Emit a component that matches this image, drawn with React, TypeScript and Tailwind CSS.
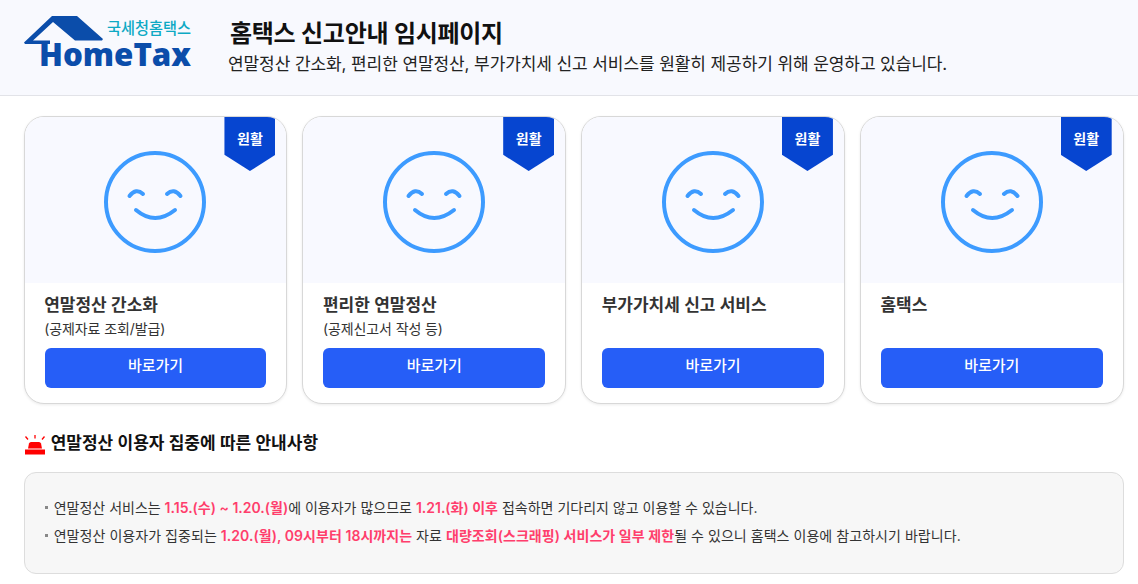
const FONT = "font-['Inter','Noto_Sans_CJK_KR',sans-serif]";

function Logo() {
  return (
    <svg width="170" height="64" viewBox="0 0 170 64" className="shrink-0">
      <path d="M0 27.500 L28 1 L53 1 L79 24 L78 25.500 L51 25.500 L29 7 L9 25.500 L26 25.500 L26 29 L1 29 Z" fill="#0b4daa" />
      <text x="15" y="51" fontFamily="'Open Sans',sans-serif" fontWeight="800" fontSize="32" fill="#0b4daa" textLength="152" lengthAdjust="spacingAndGlyphs">HomeTax</text>
      <text x="83" y="19" fontFamily="'Noto Sans CJK KR',sans-serif" fontWeight="500" fontSize="16" fill="#0da9c4" textLength="84" lengthAdjust="spacingAndGlyphs">국세청홈택스</text>
    </svg>
  );
}

function Smile() {
  return (
    <svg width="104" height="104" viewBox="0 0 104 104" fill="none" stroke="#3d9bff" strokeLinecap="round" strokeWidth="4">
      <circle cx="52" cy="52" r="49" />
      <path d="M26.500 46 Q33 37.500 40 44" />
      <path d="M64 44 Q71 37.500 77.500 46" />
      <path d="M33 60 Q52 76 72 60" />
    </svg>
  );
}

function Badge() {
  return (
    <div className="absolute top-0 right-[11px] w-[51px] h-[54px] bg-[#0645d0] [clip-path:polygon(0_0,100%_0,100%_70%,50%_100%,0_70%)] flex justify-center pt-[11px]">
      <span className="text-[14px] leading-[22px] font-semibold text-white">원활</span>
    </div>
  );
}

function Card({ title, sub }: { title: string; sub?: string }) {
  return (
    <div className="relative h-[288px] bg-white rounded-[20px] border border-[#d8d8d8] overflow-hidden flex flex-col shadow-[0_1px_3px_rgba(0,0,0,0.08)]">
      <div className="relative h-[166px] bg-[#f8f9ff] flex justify-center pt-[33px] pr-[0.5px]">
        <Smile />
        <Badge />
      </div>
      <div className="px-5 flex flex-col flex-1">
        <div className="mt-[9px] -ml-[0.5px] h-[26px] text-[17px] leading-[26px] font-semibold text-[#333]">{title}</div>
        <div className="-ml-[0.5px] h-[21px] text-[14px] leading-[21px] tracking-[-0.1px] text-[#333]">{sub}</div>
        <div className="mt-[9px] h-[40px] pb-[3px] rounded-[6px] bg-[#265ef7] text-white text-[15px] font-medium flex items-center justify-center">바로가기</div>
      </div>
    </div>
  );
}

function Siren() {
  return (
    <svg width="20" height="20" viewBox="0 0 20 20" className="shrink-0 mt-[3px]">
      <rect x="0" y="14.500" width="20" height="5" fill="#f00" />
      <path d="M3 13.500 L4 8.500 Q4.500 7 6 7 H14 Q15.500 7 16 8.500 L17 13.500 Z" fill="#f00" />
      <path d="M10 0 V3.500 M0.500 1.500 L3 4.500 M19.500 1.500 L17 4.500" stroke="#f00" strokeWidth="1.300" />
    </svg>
  );
}

const H = ({ children }: { children: React.ReactNode }) => (
  <b className="font-semibold text-[#ff3e6c]">{children}</b>
);

function Bullet({ children, className }: { children: React.ReactNode; className?: string }) {
  return (
    <li className={`flex items-center h-[28px] text-[14px] text-[#333] ${className ?? ""}`}>
      <span className="w-[3px] h-[3px] bg-[#888] mr-[6px]" />
      <span>{children}</span>
    </li>
  );
}

export default function App() {
  return (
    <div className={`${FONT} w-[1138px] h-[584px] bg-white overflow-hidden`}>
      <header className="h-[96px] bg-[#f8f9fe] border-b border-[#e2e3e8] flex pl-[24px] pt-[15px]">
        <Logo />
        <div className="ml-[34px]">
          <h1 className="mt-[2px] ml-[2px] text-[24px] leading-[34px] tracking-[-0.3px] font-semibold text-[#111]">홈택스 신고안내 임시페이지</h1>
          <p className="text-[17px] leading-[26px] tracking-[-0.09px] text-[#222]">연말정산 간소화, 편리한 연말정산, 부가가치세 신고 서비스를 원활히 제공하기 위해 운영하고 있습니다.</p>
        </div>
      </header>
      <main className="w-[1100px] ml-[23.7px]">
        <div className="mt-[20px] grid grid-cols-4 gap-[15px]">
          <Card title="연말정산 간소화" sub="(공제자료 조회/발급)" />
          <Card title="편리한 연말정산" sub="(공제신고서 작성 등)" />
          <Card title="부가가치세 신고 서비스" />
          <Card title="홈택스" />
        </div>
        <div className="mt-[27px] h-[24px] flex items-center gap-[5.7px] pl-[1.3px]">
          <Siren />
          <h2 className="text-[17px] leading-[24px] font-semibold text-[#111]">연말정산 이용자 집중에 따른 안내사항</h2>
        </div>
        <ul className="mt-[17px] h-[102px] bg-[#f7f7f7] border border-[#ddd] rounded-[12px] pl-[20px] pt-[20px]">
          <Bullet>연말정산 서비스는 <H>1.15.(수) ~ 1.20.(월)</H>에 이용자가 많으므로 <H>1.21.(화) 이후</H> 접속하면 기다리지 않고 이용할 수 있습니다.</Bullet>
          <Bullet className="tracking-[0.05px]">연말정산 이용자가 집중되는 <H>1.20.(월), 09시부터 18시까지는</H> 자료 <H>대량조회(스크래핑) 서비스가 일부 제한</H>될 수 있으니 홈택스 이용에 참고하시기 바랍니다.</Bullet>
        </ul>
      </main>
    </div>
  );
}
